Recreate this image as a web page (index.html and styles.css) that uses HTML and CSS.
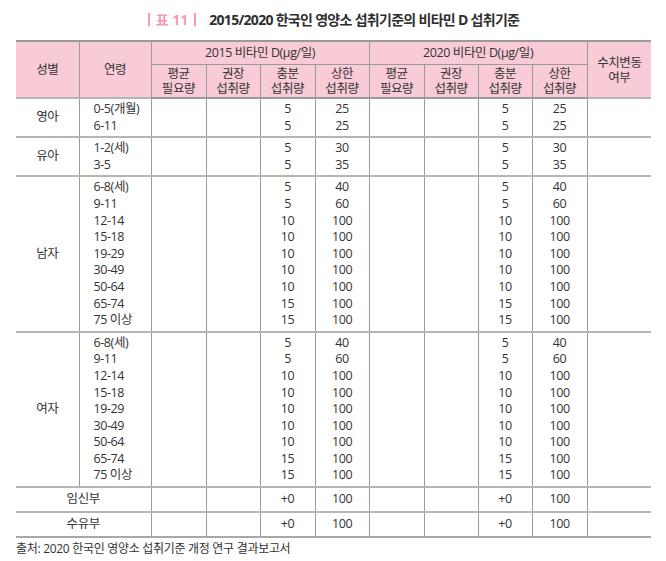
FILE: index.html
```html
<!DOCTYPE html>
<html lang="ko">
<head>
<meta charset="utf-8">
<link rel="stylesheet" href="styles.css">
</head>
<body>
<div class="page">
  <h1 class="title"><span class="tag"><span class="bar"></span>표 11<span class="bar"></span></span><span class="title-text">2015/2020 한국인 영양소 섭취기준의 비타민 D 섭취기준</span></h1>
  <table class="tbl">
    <colgroup>
      <col style="width:63px"><col style="width:72px">
      <col style="width:55px"><col style="width:54px"><col style="width:55px"><col style="width:54px">
      <col style="width:55px"><col style="width:54px"><col style="width:54px"><col style="width:55px">
      <col style="width:64px">
    </colgroup>
    <thead>
      <tr class="h1">
        <th rowspan="2">성별</th>
        <th rowspan="2">연령</th>
        <th colspan="4">2015 비타민 D(μg/일)</th>
        <th colspan="4">2020 비타민 D(μg/일)</th>
        <th rowspan="2" class="var">수치변동<br>여부</th>
      </tr>
      <tr class="h2">
        <th>평균<br>필요량</th><th>권장<br>섭취량</th><th>충분<br>섭취량</th><th>상한<br>섭취량</th>
        <th>평균<br>필요량</th><th>권장<br>섭취량</th><th>충분<br>섭취량</th><th>상한<br>섭취량</th>
      </tr>
    </thead>
    <tbody>
      <tr class="grp">
        <td>영아</td>
        <td class="age">0-5(개월)<br>6-11</td>
        <td></td><td></td><td>5<br>5</td><td>25<br>25</td>
        <td></td><td></td><td>5<br>5</td><td>25<br>25</td>
        <td></td>
      </tr>
      <tr class="grp">
        <td>유아</td>
        <td class="age">1-2(세)<br>3-5</td>
        <td></td><td></td><td>5<br>5</td><td>30<br>35</td>
        <td></td><td></td><td>5<br>5</td><td>30<br>35</td>
        <td></td>
      </tr>
      <tr class="grp">
        <td>남자</td>
        <td class="age">6-8(세)<br>9-11<br>12-14<br>15-18<br>19-29<br>30-49<br>50-64<br>65-74<br>75 이상</td>
        <td></td><td></td>
        <td>5<br>5<br>10<br>10<br>10<br>10<br>10<br>15<br>15</td>
        <td>40<br>60<br>100<br>100<br>100<br>100<br>100<br>100<br>100</td>
        <td></td><td></td>
        <td>5<br>5<br>10<br>10<br>10<br>10<br>10<br>15<br>15</td>
        <td>40<br>60<br>100<br>100<br>100<br>100<br>100<br>100<br>100</td>
        <td></td>
      </tr>
      <tr class="grp">
        <td>여자</td>
        <td class="age">6-8(세)<br>9-11<br>12-14<br>15-18<br>19-29<br>30-49<br>50-64<br>65-74<br>75 이상</td>
        <td></td><td></td>
        <td>5<br>5<br>10<br>10<br>10<br>10<br>10<br>15<br>15</td>
        <td>40<br>60<br>100<br>100<br>100<br>100<br>100<br>100<br>100</td>
        <td></td><td></td>
        <td>5<br>5<br>10<br>10<br>10<br>10<br>10<br>15<br>15</td>
        <td>40<br>60<br>100<br>100<br>100<br>100<br>100<br>100<br>100</td>
        <td></td>
      </tr>
      <tr class="single">
        <td colspan="2">임신부</td>
        <td></td><td></td><td>+0</td><td>100</td>
        <td></td><td></td><td>+0</td><td>100</td>
        <td></td>
      </tr>
      <tr class="single last">
        <td colspan="2">수유부</td>
        <td></td><td></td><td>+0</td><td>100</td>
        <td></td><td></td><td>+0</td><td>100</td>
        <td></td>
      </tr>
    </tbody>
  </table>
  <p class="source">출처: 2020 한국인 영양소 섭취기준 개정 연구 결과보고서</p>
</div>
</body>
</html>
```

FILE: styles.css
```css
* { box-sizing: border-box; }
html, body {
  margin: 0;
  padding: 0;
  background: #ffffff;
}
body {
  font-family: "Open Sans", "Noto Sans CJK KR", sans-serif;
  color: #333333;
}
.page {
  padding: 0 15px 0 16px;
}
.title {
  margin: 0;
  height: 40px;
  display: flex;
  align-items: center;
  justify-content: center;
  font-size: 14px;
  font-weight: 700;
  letter-spacing: -0.7px;
  padding-bottom: 2px;
}
.tag {
  display: inline-flex;
  align-items: center;
  color: #f49bb2;
  gap: 6px;
  margin-right: 13px;
  letter-spacing: 0;
}
.bar {
  display: inline-block;
  width: 2px;
  height: 13px;
  background: #f49bb2;
}
.title-text {
  color: #2f2f2f;
}
.tbl {
  width: 635px;
  table-layout: fixed;
  border-collapse: collapse;
  font-size: 12.5px;
  letter-spacing: -0.4px;
  border-top: 2px solid #9a9a9a;
}
.tbl th {
  background: #f9cbd6;
  font-weight: 400;
  border: 1px solid #9a9a9a;
  padding: 0;
  text-align: center;
  vertical-align: middle;
}
.tbl th:first-child { border-left: none; }
.tbl th:last-child { border-right: none; }
.tbl .var { border-right: none; }
.tbl .h1 th {
  height: 23px;
  line-height: 15px;
  border-top: none;
}
.tbl .h2 th {
  height: 34px;
  line-height: 15px;
  border-bottom: 2px solid #9a9a9a;
}
.tbl td {
  border-left: 1px solid #9a9a9a;
  border-right: 1px solid #9a9a9a;
  border-top: 2px solid #b5b5b5;
  border-bottom: 2px solid #b5b5b5;
  text-align: center;
  vertical-align: middle;
  padding: 2px 0 2px;
  line-height: 16.6px;
}
.tbl td:first-child { border-left: none; }
.tbl td:last-child { border-right: none; }
.tbl td.age {
  text-align: left;
  padding-left: 14px;
}
.tbl .single td {
  height: 25px;
  padding: 2px 0 2px;
}
.tbl .last td {
  border-bottom: 2px solid #a8a8a8;
}
.source {
  margin: 3px 0 0;
  font-size: 12px;
  letter-spacing: -0.3px;
  line-height: 16px;
  color: #333333;
}
```
